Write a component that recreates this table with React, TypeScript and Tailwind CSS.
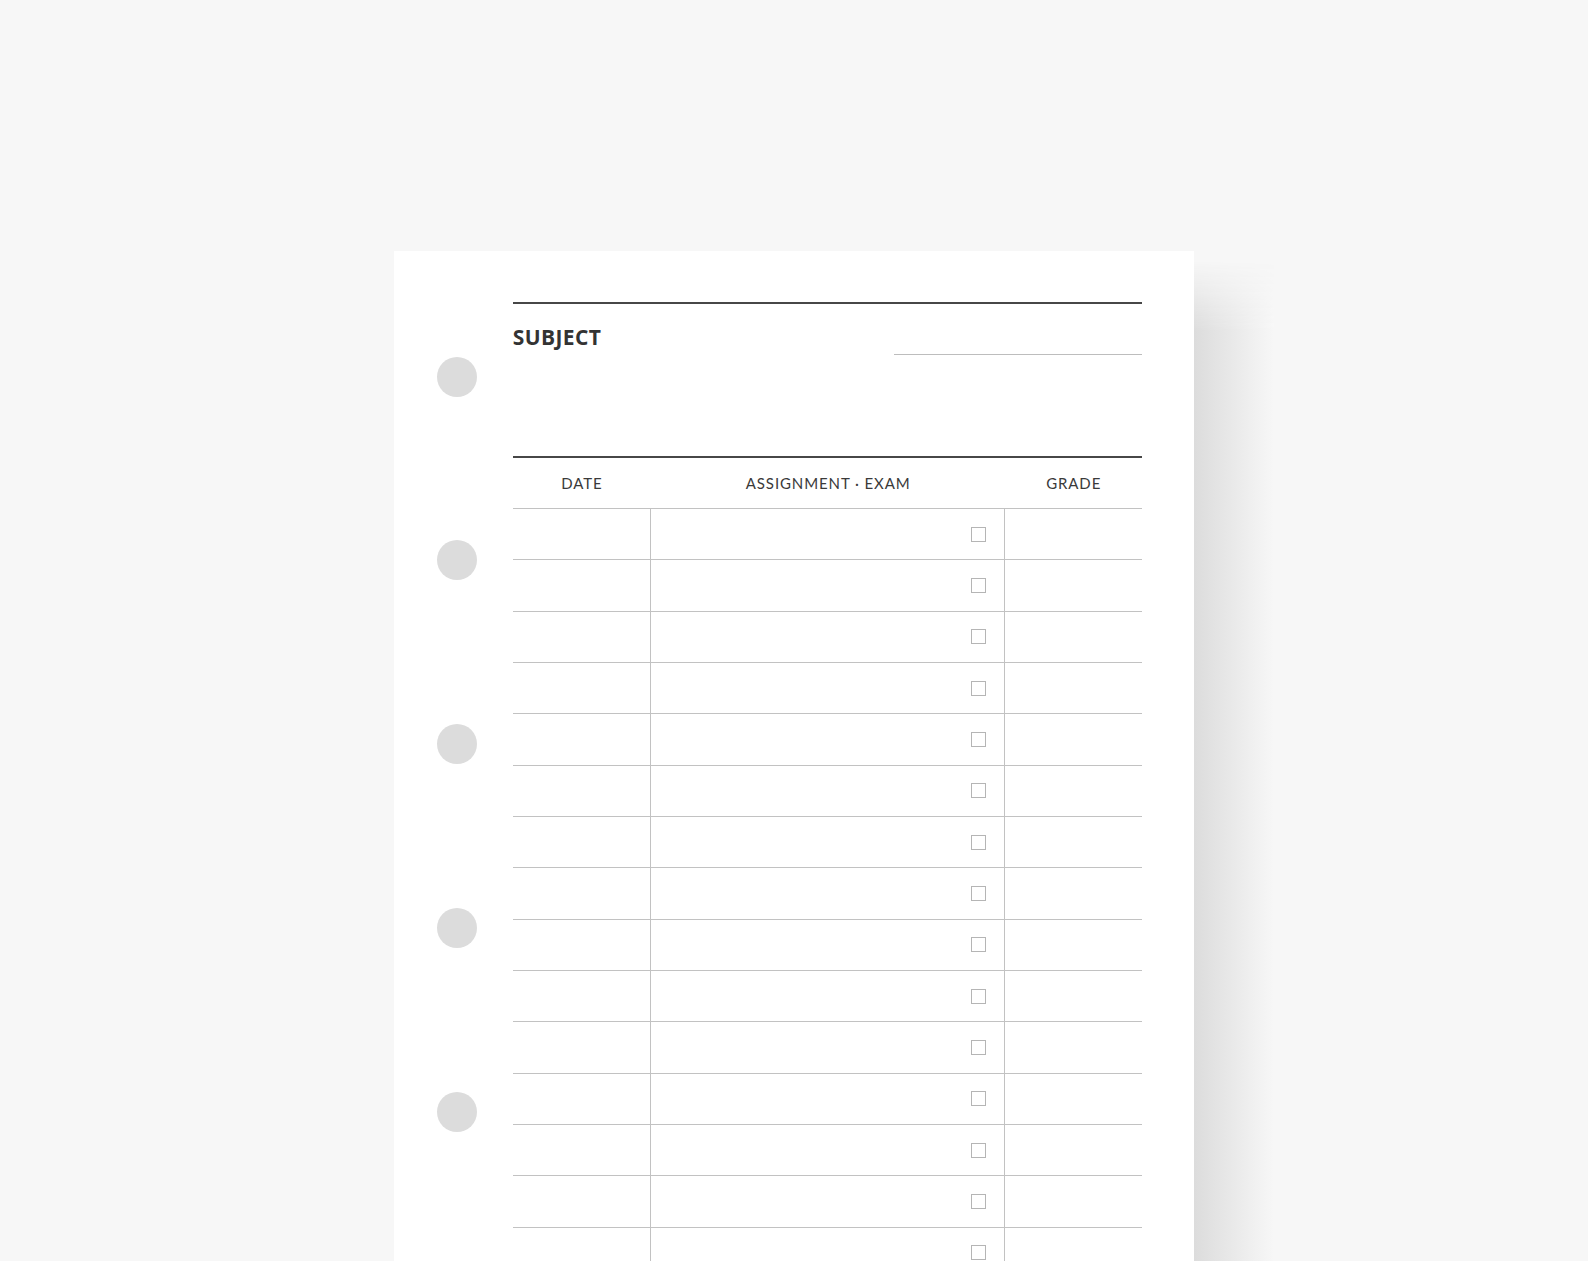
export default function App() {
  const rows = Array.from({ length: 16 });
  const holes = Array.from({ length: 5 });
  return (
    <div className="w-full h-[1261px] bg-[#f7f7f7] overflow-hidden flex pt-[251px] pl-[394px]">
      <div className="w-[800px] shrink-0 bg-white flex">
        <div className="w-[118.7px] shrink-0 flex flex-col pl-[42.5px] pt-[105.7px] gap-[143.8px]">
          {holes.map((_, i) => (
            <div key={i} className="w-[40px] h-[40px] shrink-0 rounded-full bg-[#dcdcdc]" />
          ))}
        </div>
        <div className="w-[629.5px] shrink-0 flex flex-col pt-[50.5px]">
          <div className="h-[2px] shrink-0 bg-[#474747]" />
          <div className="h-[152.5px] shrink-0 flex justify-between items-start">
            <div
              className="pt-[23.5px] text-[21px] leading-[21px] font-bold tracking-[0.02em] text-[#333333]"
              style={{ fontFamily: '"Open Sans", sans-serif' }}
            >
              SUBJECT
            </div>
            <div className="w-[248px] h-px mt-[50px] bg-[#bdbdbd]" />
          </div>
          <div className="h-[2px] shrink-0 bg-[#474747]" />
          <div
            className="h-[51px] shrink-0 border-b border-[#c2c2c2] grid grid-cols-[138.5px_354px_1fr] items-center text-[15px] tracking-[0.06em] text-[#3a3a3a]"
            style={{ fontFamily: 'Lato, sans-serif' }}
          >
            <div className="text-center">DATE</div>
            <div className="text-center">ASSIGNMENT · EXAM</div>
            <div className="text-center">GRADE</div>
          </div>
          {rows.map((_, i) => (
            <div
              key={i}
              className="h-[51.35px] shrink-0 border-b border-[#c2c2c2] grid grid-cols-[138.5px_354px_1fr]"
            >
              <div className="border-r border-[#c2c2c2]" />
              <div className="border-r border-[#c2c2c2] flex items-center justify-end pr-[18px]">
                <div className="w-[15px] h-[15px] border border-[#b5b5b5]" />
              </div>
              <div />
            </div>
          ))}
        </div>
      </div>
      <div className="w-[80px] shrink-0 self-stretch bg-[linear-gradient(to_right,#dcdcdc,#f7f7f7)] [mask-image:linear-gradient(to_bottom,transparent_10px,black_80px)]" />
    </div>
  );
}
